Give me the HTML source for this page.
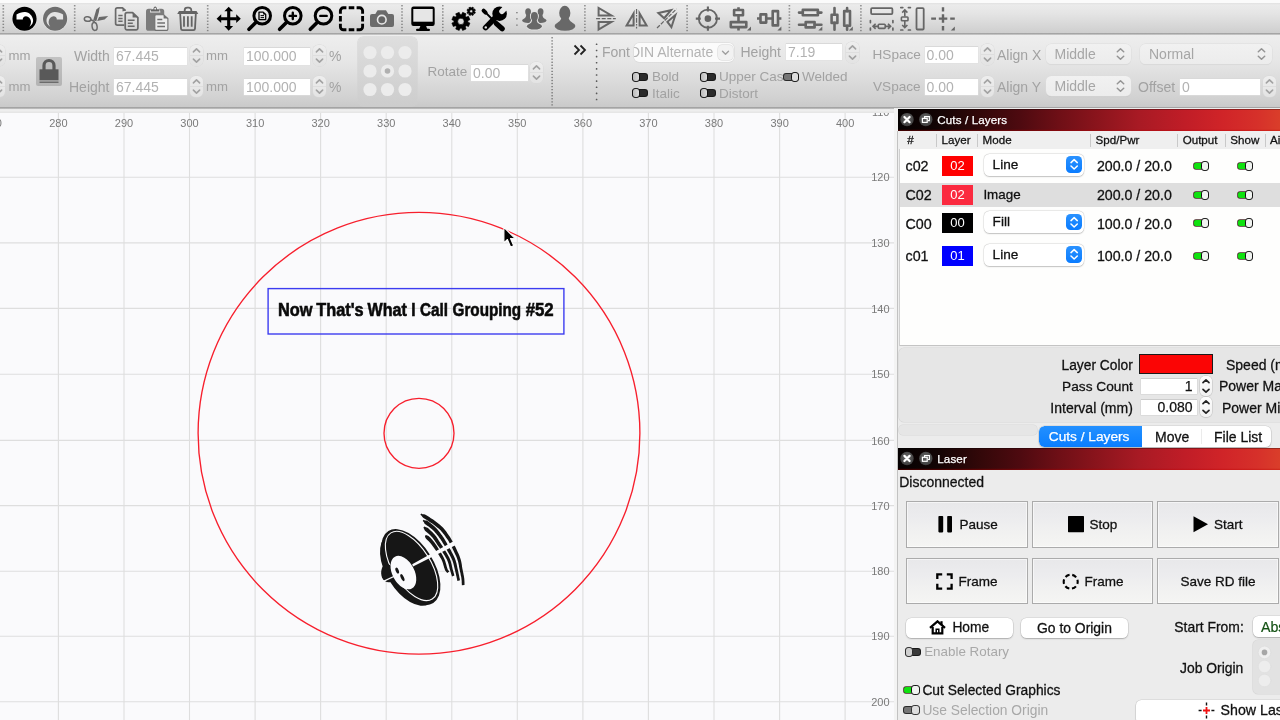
<!DOCTYPE html>
<html><head><meta charset="utf-8"><title>LightBurn</title>
<style>
html,body{margin:0;padding:0}
body{width:1280px;height:720px;overflow:hidden;position:relative;background:#ececec;font-family:"Liberation Sans",sans-serif;font-size:14px;color:#111}
#root{position:absolute;left:0;top:0;width:1280px;height:720px;overflow:hidden;will-change:transform}
.a{position:absolute}
.k{-webkit-text-stroke:.28px #111}
.t{position:absolute;white-space:nowrap;line-height:16px;height:16px}
#tb1{left:0;top:0;width:1280px;height:34px;background:linear-gradient(#fbfbfb 0,#fbfbfb 2.7px,#e3e3e3 3.4px,#ebebeb 5px,#e4e4e4 14px,#cfcfcf 32.6px,#a0a0a0 33.6px,#9c9c9c 34px)}
#tb2{left:0;top:34px;width:1280px;height:78px;background:linear-gradient(#a4a4a4 0,#eeeeee 1.2px,#e6e6e6 28px,#d0d0d0 66px,#cacaca 72.6px,#a4a4a4 73.4px,#a6a6a6 74.3px,#eaeaea 75px,#eeeeee 76.5px,#e8e8e8 78px)}
.d{color:#a2a2a2}
.inp{position:absolute;background:#fff;box-sizing:border-box;box-shadow:0 -1px 0 #d9d9d9,0 0 0 .5px #e0e0e0;color:#b2b2b2;font-size:14px;line-height:17px;white-space:nowrap;overflow:hidden;padding-left:2px}
.vsep{position:absolute;width:0;border-left:2px dotted #8f8f8f}
.stp{position:absolute;width:13px;height:21px;border-radius:5.5px;background:linear-gradient(#eeeeee,#e3e3e3);box-shadow:0 0 0 .5px #d8d8d8;overflow:hidden}
.stp svg{position:absolute;left:0;top:0}
.tg{position:absolute;margin:1px 0 0 1px;width:14.4px;height:6.2px;border-radius:2px;background:#2b2b2b;box-shadow:0 0 0 1px #181818}
.tg i{position:absolute;left:-1px;top:-2px;width:8.4px;height:10.2px;border-radius:3.1px;background:linear-gradient(90deg,#bcbcbc,#dcdcdc);border:1.3px solid #121212;box-sizing:border-box}
.tg.on{background:#0fe20f;box-shadow:0 0 0 .8px #4a2a2a}
.tg.on i{left:auto;right:-1px;background:#f1f4f1}
.tg.gr{background:#767676;box-shadow:0 0 0 1px #2a2a2a}
.tg.gr i{left:auto;right:-1px;background:#dedede}
.dd{position:absolute;box-sizing:border-box;border-radius:5.5px;background:linear-gradient(#f1f1f1,#ececec);box-shadow:0 0 0 .5px #dcdcdc,0 1px 1px rgba(0,0,0,.06);color:#a6a6a6;line-height:19px;padding-left:9px;white-space:nowrap}
#canvas{left:0;top:112px;width:894px;height:608px;background:#fafafc;overflow:hidden}
#right{left:894px;top:108px;width:386px;height:612px;background:#ececec}
</style></head>
<body>
<div id="root">
<div id="tb1" class="a"></div>
<svg class="a" style="left:0;top:0" width="1280" height="34" viewBox="0 0 1280 34"><rect x="2.5" y="5.1" width="1.6" height="1.3" fill="#858585"/><rect x="2.5" y="8.2" width="1.6" height="1.3" fill="#858585"/><rect x="2.5" y="11.3" width="1.6" height="1.3" fill="#858585"/><rect x="2.5" y="14.4" width="1.6" height="1.3" fill="#858585"/><rect x="2.5" y="17.5" width="1.6" height="1.3" fill="#858585"/><rect x="2.5" y="20.6" width="1.6" height="1.3" fill="#858585"/><rect x="2.5" y="23.7" width="1.6" height="1.3" fill="#858585"/><rect x="2.5" y="26.8" width="1.6" height="1.3" fill="#858585"/><rect x="2.5" y="29.9" width="1.6" height="1.3" fill="#858585"/>
<rect x="73.9" y="5.1" width="1.6" height="1.3" fill="#858585"/><rect x="73.9" y="8.2" width="1.6" height="1.3" fill="#858585"/><rect x="73.9" y="11.3" width="1.6" height="1.3" fill="#858585"/><rect x="73.9" y="14.4" width="1.6" height="1.3" fill="#858585"/><rect x="73.9" y="17.5" width="1.6" height="1.3" fill="#858585"/><rect x="73.9" y="20.6" width="1.6" height="1.3" fill="#858585"/><rect x="73.9" y="23.7" width="1.6" height="1.3" fill="#858585"/><rect x="73.9" y="26.8" width="1.6" height="1.3" fill="#858585"/><rect x="73.9" y="29.9" width="1.6" height="1.3" fill="#858585"/>
<rect x="206.9" y="5.1" width="1.6" height="1.3" fill="#858585"/><rect x="206.9" y="8.2" width="1.6" height="1.3" fill="#858585"/><rect x="206.9" y="11.3" width="1.6" height="1.3" fill="#858585"/><rect x="206.9" y="14.4" width="1.6" height="1.3" fill="#858585"/><rect x="206.9" y="17.5" width="1.6" height="1.3" fill="#858585"/><rect x="206.9" y="20.6" width="1.6" height="1.3" fill="#858585"/><rect x="206.9" y="23.7" width="1.6" height="1.3" fill="#858585"/><rect x="206.9" y="26.8" width="1.6" height="1.3" fill="#858585"/><rect x="206.9" y="29.9" width="1.6" height="1.3" fill="#858585"/>
<rect x="401.2" y="5.1" width="1.6" height="1.3" fill="#858585"/><rect x="401.2" y="8.2" width="1.6" height="1.3" fill="#858585"/><rect x="401.2" y="11.3" width="1.6" height="1.3" fill="#858585"/><rect x="401.2" y="14.4" width="1.6" height="1.3" fill="#858585"/><rect x="401.2" y="17.5" width="1.6" height="1.3" fill="#858585"/><rect x="401.2" y="20.6" width="1.6" height="1.3" fill="#858585"/><rect x="401.2" y="23.7" width="1.6" height="1.3" fill="#858585"/><rect x="401.2" y="26.8" width="1.6" height="1.3" fill="#858585"/><rect x="401.2" y="29.9" width="1.6" height="1.3" fill="#858585"/>
<rect x="442.0" y="5.1" width="1.6" height="1.3" fill="#858585"/><rect x="442.0" y="8.2" width="1.6" height="1.3" fill="#858585"/><rect x="442.0" y="11.3" width="1.6" height="1.3" fill="#858585"/><rect x="442.0" y="14.4" width="1.6" height="1.3" fill="#858585"/><rect x="442.0" y="17.5" width="1.6" height="1.3" fill="#858585"/><rect x="442.0" y="20.6" width="1.6" height="1.3" fill="#858585"/><rect x="442.0" y="23.7" width="1.6" height="1.3" fill="#858585"/><rect x="442.0" y="26.8" width="1.6" height="1.3" fill="#858585"/><rect x="442.0" y="29.9" width="1.6" height="1.3" fill="#858585"/>
<rect x="584.1" y="5.1" width="1.6" height="1.3" fill="#858585"/><rect x="584.1" y="8.2" width="1.6" height="1.3" fill="#858585"/><rect x="584.1" y="11.3" width="1.6" height="1.3" fill="#858585"/><rect x="584.1" y="14.4" width="1.6" height="1.3" fill="#858585"/><rect x="584.1" y="17.5" width="1.6" height="1.3" fill="#858585"/><rect x="584.1" y="20.6" width="1.6" height="1.3" fill="#858585"/><rect x="584.1" y="23.7" width="1.6" height="1.3" fill="#858585"/><rect x="584.1" y="26.8" width="1.6" height="1.3" fill="#858585"/><rect x="584.1" y="29.9" width="1.6" height="1.3" fill="#858585"/>
<rect x="686.3" y="5.1" width="1.6" height="1.3" fill="#858585"/><rect x="686.3" y="8.2" width="1.6" height="1.3" fill="#858585"/><rect x="686.3" y="11.3" width="1.6" height="1.3" fill="#858585"/><rect x="686.3" y="14.4" width="1.6" height="1.3" fill="#858585"/><rect x="686.3" y="17.5" width="1.6" height="1.3" fill="#858585"/><rect x="686.3" y="20.6" width="1.6" height="1.3" fill="#858585"/><rect x="686.3" y="23.7" width="1.6" height="1.3" fill="#858585"/><rect x="686.3" y="26.8" width="1.6" height="1.3" fill="#858585"/><rect x="686.3" y="29.9" width="1.6" height="1.3" fill="#858585"/>
<rect x="788.6" y="5.1" width="1.6" height="1.3" fill="#858585"/><rect x="788.6" y="8.2" width="1.6" height="1.3" fill="#858585"/><rect x="788.6" y="11.3" width="1.6" height="1.3" fill="#858585"/><rect x="788.6" y="14.4" width="1.6" height="1.3" fill="#858585"/><rect x="788.6" y="17.5" width="1.6" height="1.3" fill="#858585"/><rect x="788.6" y="20.6" width="1.6" height="1.3" fill="#858585"/><rect x="788.6" y="23.7" width="1.6" height="1.3" fill="#858585"/><rect x="788.6" y="26.8" width="1.6" height="1.3" fill="#858585"/><rect x="788.6" y="29.9" width="1.6" height="1.3" fill="#858585"/>
<rect x="860.1" y="5.1" width="1.6" height="1.3" fill="#858585"/><rect x="860.1" y="8.2" width="1.6" height="1.3" fill="#858585"/><rect x="860.1" y="11.3" width="1.6" height="1.3" fill="#858585"/><rect x="860.1" y="14.4" width="1.6" height="1.3" fill="#858585"/><rect x="860.1" y="17.5" width="1.6" height="1.3" fill="#858585"/><rect x="860.1" y="20.6" width="1.6" height="1.3" fill="#858585"/><rect x="860.1" y="23.7" width="1.6" height="1.3" fill="#858585"/><rect x="860.1" y="26.8" width="1.6" height="1.3" fill="#858585"/><rect x="860.1" y="29.9" width="1.6" height="1.3" fill="#858585"/>
<rect x="516.1" y="12.0" width="1.6" height="1.3" fill="#858585"/><rect x="516.1" y="18.2" width="1.6" height="1.3" fill="#858585"/><rect x="516.1" y="24.5" width="1.6" height="1.3" fill="#858585"/>
<circle cx="24.5" cy="18.75" r="12.6" fill="#f2f2f2" opacity=".6"/><circle cx="24.5" cy="18.75" r="12.1" fill="#000"/>
<path d="M16.5 14.6L16.5 19.6L22.8 19.6C22.6 17.8 24 16.3 26 16.25C28.5 16.2 30.5 18.5 30.9 21C31.2 23 30.6 25 29.4 26.7C32 25 33.4 22.5 33.1 20C32.7 16 29.5 12.1 25 11.9C22 11.8 19 12.9 16.5 14.6Z" fill="#fff"/>
<circle cx="55.1" cy="18.75" r="12.6" fill="#f2f2f2" opacity=".6"/><circle cx="55.1" cy="18.75" r="12.1" fill="#6e6e6e"/>
<path d="M16.5 14.6L16.5 19.6L22.8 19.6C22.6 17.8 24 16.3 26 16.25C28.5 16.2 30.5 18.5 30.9 21C31.2 23 30.6 25 29.4 26.7C32 25 33.4 22.5 33.1 20C32.7 16 29.5 12.1 25 11.9C22 11.8 19 12.9 16.5 14.6Z" fill="#e4e4e4" transform="translate(79.6,0) scale(-1,1)"/>
<g fill="none" stroke="#6a6a6a" stroke-width="1.5"><ellipse cx="87.6" cy="19" rx="3.3" ry="2.3" transform="rotate(8 87.6 19)"/><ellipse cx="94.6" cy="26.4" rx="2.5" ry="4" transform="rotate(-8 94.6 26.4)"/><path d="M90.8 19.8L94 21.2M94.2 22.4L94.1 21"/></g>
<path d="M93.2 20.2L96.3 9.6L99.8 6.7L98.8 12.5L96.3 21.2Z M97.2 21.1L99 17L108.2 16.1L104.6 19.4Z" fill="#6a6a6a"/>
<g fill="none" stroke="#6a6a6a" stroke-width="1.7" stroke-linejoin="round"><path d="M124.3 25.1H117.4a1.8 1.8 0 0 1 -1.8 -1.8V9.6a1.8 1.8 0 0 1 1.8 -1.8H122.5L125.6 10.6"/><path d="M127 12.6H132.6L137.9 17.6V28.1a1.8 1.8 0 0 1 -1.8 1.8H127a1.8 1.8 0 0 1 -1.8 -1.8V14.4a1.8 1.8 0 0 1 1.8 -1.8Z"/></g>
<path d="M132.6 12.6L137.9 17.6H132.6Z M122.5 7.8L125.6 10.6L122.5 11.5Z" fill="#6a6a6a"/>
<path d="M118.3 15.5H122.6M118.3 18.4H122.6M118.3 21.3H122.6M127.8 20.3H134.6M127.8 23.3H132.8M127.8 26.3H134.6" stroke="#6a6a6a" stroke-width="1.5" fill="none"/>
<rect x="146" y="8.8" width="18.2" height="22" rx="2.6" fill="#7c7c7c"/>
<path d="M150 12.6C150 9.5 152 8 155.2 5.6C158.5 8 160.4 9.5 160.4 12.6Z" fill="#ededed"/>
<path d="M151 11.6V9.3H153.4C153.4 7.6 154.2 6.4 155.2 6.4C156.2 6.4 157 7.6 157 9.3H159.4V11.6Z" fill="#666"/><circle cx="155.2" cy="8.7" r="0.9" fill="#ededed"/>
<path d="M156.2 14.7H163.6L167.9 18.6V29a1.4 1.4 0 0 1 -1.4 1.4H156.2a1.4 1.4 0 0 1 -1.4 -1.4V16.1a1.4 1.4 0 0 1 1.4 -1.4Z" fill="#ececec" stroke="#707070" stroke-width="1.1"/>
<path d="M163.6 14.7L167.9 18.6H163.6Z" fill="#707070"/>
<path d="M157.3 19.5H162.3M157.3 23H165M157.3 26.5H165" stroke="#707070" stroke-width="1.4" fill="none"/>
<path d="M179 11H196.5L198.3 13.9H177.2Z" fill="#646464"/>
<path d="M184.7 11.2V10.2a2.5 2.5 0 0 1 2.5 -2.5H188.8a2.5 2.5 0 0 1 2.5 2.5V11.2" fill="none" stroke="#646464" stroke-width="1.8"/>
<path d="M180.2 14L181 28.6a1.6 1.6 0 0 0 1.6 1.5H193.4a1.6 1.6 0 0 0 1.6 -1.5L195.8 14" fill="none" stroke="#646464" stroke-width="1.8"/>
<path d="M184 16.3V26.8M187.9 16.3V26.8M191.7 16.3V26.8" stroke="#646464" stroke-width="1.8" fill="none"/>
<path d="M228.7 10.7V26.7M220.7 18.7H236.7" stroke="#000" stroke-width="3.1" fill="none"/>
<path d="M228.7 6.699999999999999l4.4 4.6h-8.8ZM228.7 30.7l4.4 -4.6h-8.8ZM216.6 18.7l4.6 -4.4v8.8ZM240.79999999999998 18.7l-4.6 -4.4v8.8Z" fill="#000"/>
<circle cx="262.2" cy="15.7" r="8.3" fill="none" stroke="#000" stroke-width="3"/><path d="M255.79999999999998 22.5L249.0 29.299999999999997" stroke="#000" stroke-width="3.6" stroke-linecap="round"/>
<path d="M259 12.1H263.2L265.7 14.5V19.6H259Z" fill="none" stroke="#000" stroke-width="1.3" stroke-linejoin="round"/><path d="M260.6 15.6H264M260.6 17.6H264" stroke="#000" stroke-width="1" fill="none"/><path d="M263.2 12.1L265.7 14.5H263.2Z" fill="#000"/>
<circle cx="292.8" cy="15.7" r="8.3" fill="none" stroke="#000" stroke-width="3"/><path d="M286.40000000000003 22.5L279.6 29.299999999999997" stroke="#000" stroke-width="3.6" stroke-linecap="round"/>
<path d="M289.6 15.9H296M292.8 12.7V19.1" stroke="#000" stroke-width="2.4" stroke-linecap="round"/>
<circle cx="323.5" cy="15.7" r="8.3" fill="none" stroke="#000" stroke-width="3"/><path d="M317.1 22.5L310.3 29.299999999999997" stroke="#000" stroke-width="3.6" stroke-linecap="round"/>
<path d="M320.3 15.9H326.7" stroke="#000" stroke-width="2.4" stroke-linecap="round"/>
<path d="M340.4 13.8V10.8a3.0 3.0 0 0 1 3.0 -3.0H346.4M356.6 7.8H359.6a3.0 3.0 0 0 1 3.0 3.0V13.8M362.6 23.8V26.8a3.0 3.0 0 0 1 -3.0 3.0H356.6M346.4 29.8H343.4a3.0 3.0 0 0 1 -3.0 -3.0V23.8M348.7 7.8H354.3M348.7 29.8H354.3M340.4 16.1V21.5M362.6 16.1V21.5" stroke="#000" stroke-width="2.9" fill="none"/>
<rect x="370" y="14" width="24" height="12.9" rx="2" fill="#6b6b6b"/><path d="M375 14.5L377.6 10.3H386L388.6 14.5Z" fill="#6b6b6b"/><circle cx="381.8" cy="19.7" r="4.3" fill="#6b6b6b" stroke="#e8e8e8" stroke-width="1.6"/><circle cx="381.8" cy="19.7" r="2.6" fill="#646464"/>
<rect x="411.3" y="6.5" width="23.4" height="19.4" rx="2.2" fill="#000"/><rect x="413.3" y="9" width="19.4" height="12.7" fill="#e6e6e6"/><path d="M420.6 25.5H425.9L427.3 29H419.2Z" fill="#000"/><rect x="416" y="28.8" width="14" height="2.3" rx="1.1" fill="#000"/>
<path d="M467.86 22.17L469.94 23.12L468.51 26.57L466.36 25.78L465.28 26.86L466.07 29.01L462.62 30.44L461.67 28.36L460.13 28.36L459.18 30.44L455.73 29.01L456.52 26.86L455.44 25.78L453.29 26.57L451.86 23.12L453.94 22.17L453.94 20.63L451.86 19.68L453.29 16.23L455.44 17.02L456.52 15.94L455.73 13.79L459.18 12.36L460.13 14.44L461.67 14.44L462.62 12.36L466.07 13.79L465.28 15.94L466.36 17.02L468.51 16.23L469.94 19.68L467.86 20.63ZM464.09999999999997 21.4a3.2 3.2 0 1 0 -6.4 0a3.2 3.2 0 1 0 6.4 0Z" fill="#000" fill-rule="evenodd" stroke="#000" stroke-width=".6" stroke-linejoin="round"/>
<path d="M474.38 11.65L475.42 12.11L474.76 13.72L473.70 13.30L473.20 13.80L473.62 14.86L472.01 15.52L471.55 14.48L470.85 14.48L470.39 15.52L468.78 14.86L469.20 13.80L468.70 13.30L467.64 13.72L466.98 12.11L468.02 11.65L468.02 10.95L466.98 10.49L467.64 8.88L468.70 9.30L469.20 8.80L468.78 7.74L470.39 7.08L470.85 8.12L471.55 8.12L472.01 7.08L473.62 7.74L473.20 8.80L473.70 9.30L474.76 8.88L475.42 10.49L474.38 10.95ZM472.7 11.3a1.5 1.5 0 1 0 -3.0 0a1.5 1.5 0 1 0 3.0 0Z" fill="#000" fill-rule="evenodd" stroke="#000" stroke-width=".6" stroke-linejoin="round"/>
<path d="M485.6 27.6L496 17" stroke="#000" stroke-width="5.6" stroke-linecap="round"/>
<circle cx="485.8" cy="27.4" r="1.2" fill="#e6e6e6"/>
<mask id="wm" maskUnits="userSpaceOnUse" x="480" y="0" width="40" height="34"><rect x="480" y="0" width="40" height="34" fill="#fff"/><path d="M501.9 11.3L509 4.2" stroke="#000" stroke-width="5.4" stroke-linecap="round"/></mask><circle cx="499.6" cy="13.7" r="7.3" fill="#000" mask="url(#wm)"/>
<path d="M484.2 11.2L493 20" stroke="#000" stroke-width="1.9" stroke-linecap="round"/>
<path d="M483.6 10.6L485.6 12.6" stroke="#000" stroke-width="4" stroke-linecap="round"/>
<path d="M496.4 23.6L502.2 28.8" stroke="#000" stroke-width="5.2" stroke-linecap="round"/><path d="M492 19L497 24" stroke="#000" stroke-width="2.8"/>
<g fill="#686868"><ellipse cx="528.1" cy="20.55" rx="5.899999999999977" ry="2.5300000000000002"/><path d="M526.302 13.55C526.302 18.0 524.33 18.7 523.6750000000001 19.3125L532.525 19.3125C531.87 18.7 529.898 18.0 529.898 13.55Z"/><ellipse cx="528.1" cy="11.8" rx="2.9" ry="3.5"/></g>
<g fill="#686868"><ellipse cx="540.5999999999999" cy="20.55" rx="5.800000000000011" ry="2.5300000000000002"/><path d="M538.8019999999999 13.55C538.8019999999999 18.0 536.8299999999999 18.7 536.2499999999999 19.3125L544.9499999999999 19.3125C544.3699999999999 18.7 542.3979999999999 18.0 542.3979999999999 13.55Z"/><ellipse cx="540.6" cy="11.8" rx="2.9" ry="3.5"/></g>
<g fill="#e2e2e2" stroke="#e2e2e2" stroke-width="1.8"><ellipse cx="534.4" cy="26.35" rx="7.5" ry="3.266000000000001"/><path d="M532.23 18.549999999999997C532.23 23.0 529.85 23.7 528.775 24.7525L540.025 24.7525C538.9499999999999 23.7 536.5699999999999 23.0 536.5699999999999 18.549999999999997Z"/><ellipse cx="534.4" cy="16.4" rx="3.5" ry="4.3"/></g><g fill="#686868"><ellipse cx="534.4" cy="26.35" rx="7.5" ry="3.266000000000001"/><path d="M532.23 18.549999999999997C532.23 23.0 529.85 23.7 528.775 24.7525L540.025 24.7525C538.9499999999999 23.7 536.5699999999999 23.0 536.5699999999999 18.549999999999997Z"/><ellipse cx="534.4" cy="16.4" rx="3.5" ry="4.3"/></g>
<g fill="#686868"><ellipse cx="565.0" cy="26.05" rx="10.399999999999977" ry="4.737999999999999"/><path d="M561.528 16.45C561.528 21.1 557.72 21.8 557.2 23.7325L572.8 23.7325C572.28 21.8 568.472 21.1 568.472 16.45Z"/><ellipse cx="564.8" cy="12.9" rx="5.6" ry="7.1"/></g>
<g fill="none" stroke="#666" stroke-width="2" stroke-linejoin="miter"><path d="M598.6 8V15.4H611.4Z"/><path d="M598.6 29.6V21.9H611.4Z"/><path d="M626.6 25.6H633.6V13.4Z"/><path d="M646.6 25.6H639.6V13.4Z"/><path d="M658.4 13L671 10.2L664.2 18.2Z"/><path d="M675.4 15L671.4 27.2L667.4 21.8Z"/></g>
<path d="M596.1 18.65H615.8" stroke="#666" stroke-width="1.3" stroke-dasharray="4 1.6" fill="none"/><path d="M636.55 8.9V28.5" stroke="#666" stroke-width="1.2" stroke-dasharray="5 1.2 1.5 1.2" fill="none"/><path d="M657 28L676.5 9" stroke="#666" stroke-width="1.2" stroke-dasharray="4 1.4" fill="none"/>
<circle cx="707.9" cy="18.65" r="9.1" fill="none" stroke="#666" stroke-width="1.8"/><circle cx="707.9" cy="18.65" r="3.3" fill="#666"/><path d="M707.9 6.6V11.6M707.9 25.7V30.7M695.8 18.65H700.8M715 18.65H720" stroke="#666" stroke-width="2.1" fill="none"/>
<g fill="none" stroke="#666" stroke-width="2.6" stroke-linejoin="round"><rect x="734.1" y="10" width="8.9" height="5.2"/><rect x="730.8" y="22.1" width="15.5" height="5"/><path d="M738.5 7.3V10M738.5 15.2V22M738.5 27.2V30.4"/></g><path d="M751 26.599999999999998V30.4H747Z" fill="#666"/>
<g fill="none" stroke="#666" stroke-width="2.6" stroke-linejoin="round"><rect x="760.5" y="14.4" width="5.7" height="8.2"/><rect x="772.7" y="11.1" width="5.3" height="14.3"/><path d="M757 18.5H760.5M766.2 18.5H772.7M778 18.5H781.4"/></g><path d="M781.4 26.599999999999998V30.4H777.4Z" fill="#666"/>
<g fill="none" stroke="#666" stroke-width="2.6" stroke-linejoin="round" stroke-linecap="round"><rect x="802.8" y="9.9" width="15.1" height="5.3"/><rect x="805.7" y="22.1" width="8.9" height="5.3"/><path d="M799 12.6H802.8M817.9 12.6H821.4M799 24.75H805.7M814.6 24.75H821.4"/></g><path d="M822.3 26.599999999999998V30.4H818.3Z" fill="#666"/>
<g fill="none" stroke="#666" stroke-width="2.6" stroke-linejoin="round" stroke-linecap="round"><rect x="831.6" y="14.8" width="5.8" height="8.1"/><rect x="844.2" y="11.1" width="5.8" height="14.7"/><path d="M834.5 8V14.8M834.5 22.9V29.7M847.1 8V11.1M847.1 25.8V29.7"/></g><path d="M852.8 26.599999999999998V30.4H848.8Z" fill="#666"/>
<rect x="871.1" y="8.2" width="21.3" height="5.9" rx="1" fill="none" stroke="#666" stroke-width="1.8"/>
<path d="M870.4 20.6V22.6M870.4 28V30M892.9 20.6V22.6M892.9 28V30" stroke="#666" stroke-width="1.7" stroke-linecap="round"/>
<rect x="878.3" y="24.3" width="6.9" height="4.1" rx=".8" fill="none" stroke="#666" stroke-width="1.6"/><path d="M878 26.35H873.2M875.6 23.8L873 26.35L875.6 28.9M885.4 26.35H890.4M888 23.8L890.6 26.35L888 28.9" fill="none" stroke="#666" stroke-width="1.6"/>
<rect x="916.5" y="8.2" width="7.2" height="21.3" rx="1" fill="none" stroke="#666" stroke-width="1.8"/>
<path d="M900.8 7.6H902.8M908.4 7.6H910.4M900.8 30H902.8M908.4 30H910.4" stroke="#666" stroke-width="1.7" stroke-linecap="round"/>
<rect x="901.4" y="17" width="6.6" height="3.8" rx=".8" fill="none" stroke="#666" stroke-width="1.6"/><path d="M904.8 16.6V10.2M902.2 12.6L904.8 10L907.4 12.6M904.8 21V27.4M902.2 25L904.8 27.6L907.4 25" fill="none" stroke="#666" stroke-width="1.6"/>
<path d="M943 7.3V11.4M943 14.2V22.8M943 26V30.4M931.2 18.65H936M938.8 18.65H947.3M950.2 18.65H954.8" stroke="#666" stroke-width="2.4" fill="none"/><path d="M954.8 26.599999999999998V30.4H950.8Z" fill="#666"/></svg>
<div id="tb2" class="a"></div>
<div class="stp" style="left:-8px;top:45px"><svg width="13" height="21" viewBox="0 0 13 21"><path d="M0 10.5H13" stroke="#dadada" stroke-width=".8"/><path d="M3.4 6.9L6.5 3.9L9.6 6.9M3.4 14.1L6.5 17.1L9.6 14.1" fill="none" stroke="#a2a2a2" stroke-width="1.6" stroke-linecap="round" stroke-linejoin="round"/></svg></div>
<div class="stp" style="left:-8px;top:76px"><svg width="13" height="21" viewBox="0 0 13 21"><path d="M0 10.5H13" stroke="#dadada" stroke-width=".8"/><path d="M3.4 6.9L6.5 3.9L9.6 6.9M3.4 14.1L6.5 17.1L9.6 14.1" fill="none" stroke="#a2a2a2" stroke-width="1.6" stroke-linecap="round" stroke-linejoin="round"/></svg></div>
<div class="t d" style="left:8.5px;top:48px;font-size:13.2px">mm</div>
<div class="t d" style="left:8.5px;top:79px;font-size:13.2px">mm</div>
<div class="a" style="left:36px;top:57px;width:26px;height:29px;background:linear-gradient(#c2c2c2,#b4b4b4);border-radius:2px"><svg class="a" style="left:0;top:0" width="26" height="29" viewBox="0 0 26 29"><path d="M8 13V8.5a5 5 0 0 1 10 0V13" fill="none" stroke="#595959" stroke-width="3.2"/><rect x="3.5" y="12.3" width="19" height="11" fill="#595959"/><rect x="3.5" y="24.6" width="19" height="1.2" fill="#595959"/></svg></div>
<div class="t d" style="left:74px;top:48px;">Width</div>
<div class="t d" style="left:69px;top:79px;">Height</div>
<div class="inp" style="left:114px;top:47.5px;width:73px;height:17px;">67.445</div>
<div class="inp" style="left:114px;top:78.5px;width:73px;height:16px;">67.445</div>
<div class="stp" style="left:190px;top:45px"><svg width="13" height="21" viewBox="0 0 13 21"><path d="M0 10.5H13" stroke="#dadada" stroke-width=".8"/><path d="M3.4 6.9L6.5 3.9L9.6 6.9M3.4 14.1L6.5 17.1L9.6 14.1" fill="none" stroke="#a2a2a2" stroke-width="1.6" stroke-linecap="round" stroke-linejoin="round"/></svg></div>
<div class="stp" style="left:190px;top:76px"><svg width="13" height="21" viewBox="0 0 13 21"><path d="M0 10.5H13" stroke="#dadada" stroke-width=".8"/><path d="M3.4 6.9L6.5 3.9L9.6 6.9M3.4 14.1L6.5 17.1L9.6 14.1" fill="none" stroke="#a2a2a2" stroke-width="1.6" stroke-linecap="round" stroke-linejoin="round"/></svg></div>
<div class="t d" style="left:206px;top:48px;font-size:13.2px">mm</div>
<div class="t d" style="left:206px;top:79px;font-size:13.2px">mm</div>
<div class="inp" style="left:244px;top:47.5px;width:66px;height:17px;">100.000</div>
<div class="inp" style="left:244px;top:78.5px;width:66px;height:16px;">100.000</div>
<div class="stp" style="left:313px;top:45px"><svg width="13" height="21" viewBox="0 0 13 21"><path d="M0 10.5H13" stroke="#dadada" stroke-width=".8"/><path d="M3.4 6.9L6.5 3.9L9.6 6.9M3.4 14.1L6.5 17.1L9.6 14.1" fill="none" stroke="#a2a2a2" stroke-width="1.6" stroke-linecap="round" stroke-linejoin="round"/></svg></div>
<div class="stp" style="left:313px;top:76px"><svg width="13" height="21" viewBox="0 0 13 21"><path d="M0 10.5H13" stroke="#dadada" stroke-width=".8"/><path d="M3.4 6.9L6.5 3.9L9.6 6.9M3.4 14.1L6.5 17.1L9.6 14.1" fill="none" stroke="#a2a2a2" stroke-width="1.6" stroke-linecap="round" stroke-linejoin="round"/></svg></div>
<div class="t d" style="left:329px;top:48px;">%</div>
<div class="t d" style="left:329px;top:79px;">%</div>
<div class="a" style="left:358px;top:37px;width:59px;height:69px;border-radius:5px;background:linear-gradient(#dedede,#cdcdcd);box-shadow:0 0 0 .5px #cfcfcf"><svg class="a" style="left:0;top:0" width="59" height="69"><circle cx="12" cy="15.5" r="6.6" fill="#ececec"/><circle cx="12" cy="34" r="6.6" fill="#ececec"/><circle cx="12" cy="52.5" r="6.6" fill="#ececec"/><circle cx="29.5" cy="15.5" r="6.6" fill="#ececec"/><circle cx="29.5" cy="34" r="6.6" fill="#ececec"/><circle cx="29.5" cy="52.5" r="6.6" fill="#ececec"/><circle cx="47" cy="15.5" r="6.6" fill="#ececec"/><circle cx="47" cy="34" r="6.6" fill="#ececec"/><circle cx="47" cy="52.5" r="6.6" fill="#ececec"/><circle cx="29.5" cy="34" r="2.8" fill="#b0b0b0"/></svg></div>
<div class="t d" style="left:427.5px;top:64px;font-size:13.5px">Rotate</div>
<div class="inp" style="left:471px;top:64.5px;width:56.5px;height:16px;">0.00</div>
<div class="stp" style="left:530px;top:62px"><svg width="13" height="21" viewBox="0 0 13 21"><path d="M0 10.5H13" stroke="#dadada" stroke-width=".8"/><path d="M3.4 6.9L6.5 3.9L9.6 6.9M3.4 14.1L6.5 17.1L9.6 14.1" fill="none" stroke="#a2a2a2" stroke-width="1.6" stroke-linecap="round" stroke-linejoin="round"/></svg></div>
<svg class="a" style="left:0;top:0;pointer-events:none" width="1280" height="112"><rect x="551.40" y="37.10" width="1.4" height="1.4" rx=".4" fill="#6e6e6e"/><rect x="551.40" y="40.15" width="1.4" height="1.4" rx=".4" fill="#6e6e6e"/><rect x="551.40" y="43.20" width="1.4" height="1.4" rx=".4" fill="#6e6e6e"/><rect x="551.40" y="46.25" width="1.4" height="1.4" rx=".4" fill="#6e6e6e"/><rect x="551.40" y="49.30" width="1.4" height="1.4" rx=".4" fill="#6e6e6e"/><rect x="551.40" y="52.35" width="1.4" height="1.4" rx=".4" fill="#6e6e6e"/><rect x="551.40" y="55.40" width="1.4" height="1.4" rx=".4" fill="#6e6e6e"/><rect x="551.40" y="58.45" width="1.4" height="1.4" rx=".4" fill="#6e6e6e"/><rect x="551.40" y="61.50" width="1.4" height="1.4" rx=".4" fill="#6e6e6e"/><rect x="551.40" y="64.55" width="1.4" height="1.4" rx=".4" fill="#6e6e6e"/><rect x="551.40" y="67.60" width="1.4" height="1.4" rx=".4" fill="#6e6e6e"/><rect x="551.40" y="70.65" width="1.4" height="1.4" rx=".4" fill="#6e6e6e"/><rect x="551.40" y="73.70" width="1.4" height="1.4" rx=".4" fill="#6e6e6e"/><rect x="551.40" y="76.75" width="1.4" height="1.4" rx=".4" fill="#6e6e6e"/><rect x="551.40" y="79.80" width="1.4" height="1.4" rx=".4" fill="#6e6e6e"/><rect x="551.40" y="82.85" width="1.4" height="1.4" rx=".4" fill="#6e6e6e"/><rect x="551.40" y="85.90" width="1.4" height="1.4" rx=".4" fill="#6e6e6e"/><rect x="551.40" y="88.95" width="1.4" height="1.4" rx=".4" fill="#6e6e6e"/><rect x="551.40" y="92.00" width="1.4" height="1.4" rx=".4" fill="#6e6e6e"/><rect x="551.40" y="95.05" width="1.4" height="1.4" rx=".4" fill="#6e6e6e"/><rect x="551.40" y="98.10" width="1.4" height="1.4" rx=".4" fill="#6e6e6e"/><rect x="551.40" y="101.15" width="1.4" height="1.4" rx=".4" fill="#6e6e6e"/><rect x="551.40" y="104.20" width="1.4" height="1.4" rx=".4" fill="#6e6e6e"/></svg>
<svg class="a" style="left:573px;top:44px" width="14" height="12" viewBox="0 0 14 12"><path d="M1.5 1.5L6 6L1.5 10.5M7.5 1.5L12 6L7.5 10.5" fill="none" stroke="#222" stroke-width="1.8"/></svg>
<svg class="a" style="left:0;top:0;pointer-events:none" width="1280" height="112"><rect x="595.80" y="43.50" width="1.6" height="1.6" rx=".4" fill="#5a5a5a"/><rect x="595.80" y="49.64" width="1.6" height="1.6" rx=".4" fill="#5a5a5a"/><rect x="595.80" y="55.78" width="1.6" height="1.6" rx=".4" fill="#5a5a5a"/><rect x="595.80" y="61.92" width="1.6" height="1.6" rx=".4" fill="#5a5a5a"/><rect x="595.80" y="68.06" width="1.6" height="1.6" rx=".4" fill="#5a5a5a"/><rect x="595.80" y="74.20" width="1.6" height="1.6" rx=".4" fill="#5a5a5a"/><rect x="595.80" y="80.34" width="1.6" height="1.6" rx=".4" fill="#5a5a5a"/><rect x="595.80" y="86.48" width="1.6" height="1.6" rx=".4" fill="#5a5a5a"/><rect x="595.80" y="92.62" width="1.6" height="1.6" rx=".4" fill="#5a5a5a"/><rect x="595.80" y="98.76" width="1.6" height="1.6" rx=".4" fill="#5a5a5a"/></svg>
<div class="t d" style="left:602px;top:44px;">Font</div>
<div class="a" style="left:634px;top:42.5px;width:100px;height:19px;border-radius:5px;background:#fbfbfb;box-shadow:0 0 0 .5px #d6d6d6;overflow:hidden"><div class="t d" style="left:-4px;top:1.5px;color:#b4b4b4">DIN Alternate</div><div class="a" style="left:84px;top:2px;width:15px;height:15px;border-radius:4px;background:#f2f2f2;box-shadow:0 0 0 .5px #d4d4d4"><svg width="15" height="15" viewBox="0 0 15 15"><path d="M4.5 6.2L7.5 9.2L10.5 6.2" fill="none" stroke="#a0a0a0" stroke-width="1.4" stroke-linecap="round" stroke-linejoin="round"/></svg></div></div>
<div class="t d" style="left:740.5px;top:44px;">Height</div>
<div class="inp" style="left:786px;top:44px;width:56px;height:16px;">7.19</div>
<div class="stp" style="left:846px;top:41.5px"><svg width="13" height="21" viewBox="0 0 13 21"><path d="M0 10.5H13" stroke="#dadada" stroke-width=".8"/><path d="M3.4 6.9L6.5 3.9L9.6 6.9M3.4 14.1L6.5 17.1L9.6 14.1" fill="none" stroke="#a2a2a2" stroke-width="1.6" stroke-linecap="round" stroke-linejoin="round"/></svg></div>
<div class="tg " style="left:632px;top:73px"><i></i></div>
<div class="t d" style="left:652px;top:69.3px;font-size:13.5px">Bold</div>
<div class="tg " style="left:632px;top:89.3px"><i></i></div>
<div class="t d" style="left:652px;top:85.8px;font-size:13.5px">Italic</div>
<div class="tg " style="left:700px;top:73px"><i></i></div>
<div class="t d" style="left:719px;top:69.3px;width:64px;overflow:hidden;font-size:13.5px">Upper Case</div>
<div class="tg " style="left:700px;top:89.3px"><i></i></div>
<div class="t d" style="left:719px;top:85.8px;font-size:13.5px">Distort</div>
<div class="tg gr" style="left:782.9px;top:73px"><i></i></div>
<div class="t d" style="left:802px;top:69.3px;font-size:13.5px">Welded</div>
<div class="t d" style="left:872.5px;top:46.5px;font-size:13.6px">HSpace</div>
<div class="t d" style="left:873px;top:79px;font-size:13.6px">VSpace</div>
<div class="inp" style="left:924.5px;top:47px;width:53px;height:16px;">0.00</div>
<div class="inp" style="left:924.5px;top:79px;width:53px;height:16px;">0.00</div>
<div class="stp" style="left:980.5px;top:44px"><svg width="13" height="21" viewBox="0 0 13 21"><path d="M0 10.5H13" stroke="#dadada" stroke-width=".8"/><path d="M3.4 6.9L6.5 3.9L9.6 6.9M3.4 14.1L6.5 17.1L9.6 14.1" fill="none" stroke="#a2a2a2" stroke-width="1.6" stroke-linecap="round" stroke-linejoin="round"/></svg></div>
<div class="stp" style="left:980.5px;top:76px"><svg width="13" height="21" viewBox="0 0 13 21"><path d="M0 10.5H13" stroke="#dadada" stroke-width=".8"/><path d="M3.4 6.9L6.5 3.9L9.6 6.9M3.4 14.1L6.5 17.1L9.6 14.1" fill="none" stroke="#a2a2a2" stroke-width="1.6" stroke-linecap="round" stroke-linejoin="round"/></svg></div>
<div class="t d" style="left:997px;top:46.5px;">Align X</div>
<div class="t d" style="left:997px;top:79px;">Align Y</div>
<div class="dd" style="left:1045.5px;top:43.7px;width:85.5px;height:20.6px;line-height:21.4px">Middle<svg class="a" style="right:6px;top:3.6px" width="9" height="14" viewBox="0 0 9 14"><path d="M1.3 4.8L4.5 1.8L7.7 4.8M1.3 9.2L4.5 12.2L7.7 9.2" fill="none" stroke="#949494" stroke-width="1.5" stroke-linecap="round" stroke-linejoin="round"/></svg></div>
<div class="dd" style="left:1045.5px;top:75.7px;width:85.5px;height:20.6px;line-height:21.4px">Middle<svg class="a" style="right:6px;top:3.6px" width="9" height="14" viewBox="0 0 9 14"><path d="M1.3 4.8L4.5 1.8L7.7 4.8M1.3 9.2L4.5 12.2L7.7 9.2" fill="none" stroke="#949494" stroke-width="1.5" stroke-linecap="round" stroke-linejoin="round"/></svg></div>
<div class="dd" style="left:1140px;top:43.7px;width:131.5px;height:20.6px;line-height:21.4px">Normal<svg class="a" style="right:6px;top:3.6px" width="9" height="14" viewBox="0 0 9 14"><path d="M1.3 4.8L4.5 1.8L7.7 4.8M1.3 9.2L4.5 12.2L7.7 9.2" fill="none" stroke="#949494" stroke-width="1.5" stroke-linecap="round" stroke-linejoin="round"/></svg></div>
<div class="t d" style="left:1138px;top:79px;">Offset</div>
<div class="inp" style="left:1180px;top:79px;width:79.5px;height:16px;">0</div>
<div class="stp" style="left:1263px;top:76px"><svg width="13" height="21" viewBox="0 0 13 21"><path d="M0 10.5H13" stroke="#dadada" stroke-width=".8"/><path d="M3.4 6.9L6.5 3.9L9.6 6.9M3.4 14.1L6.5 17.1L9.6 14.1" fill="none" stroke="#a2a2a2" stroke-width="1.6" stroke-linecap="round" stroke-linejoin="round"/></svg></div>
<div id="canvas" class="a">
<svg class="a" style="left:0;top:0" width="894" height="608" viewBox="0 112 894 608" font-family="Liberation Sans, sans-serif">
<path d="M-7.2 112V720M58.4 112V720M124.0 112V720M189.5 112V720M255.1 112V720M320.6 112V720M386.2 112V720M451.8 112V720M517.3 112V720M582.9 112V720M648.4 112V720M714.0 112V720M779.6 112V720M845.1 112V720M0 111.8H894M0 177.3H894M0 242.9H894M0 308.4H894M0 374.3H894M0 440.4H894M0 505.6H894M0 571.3H894M0 636.3H894M0 701.7H894" stroke="#dedede" stroke-width="1.1" fill="none"/>
<text x="-7.2" y="126.6" font-size="11" fill="#7a7a7a" text-anchor="middle">270</text>
<text x="58.4" y="126.6" font-size="11" fill="#7a7a7a" text-anchor="middle">280</text>
<text x="124.0" y="126.6" font-size="11" fill="#7a7a7a" text-anchor="middle">290</text>
<text x="189.5" y="126.6" font-size="11" fill="#7a7a7a" text-anchor="middle">300</text>
<text x="255.1" y="126.6" font-size="11" fill="#7a7a7a" text-anchor="middle">310</text>
<text x="320.6" y="126.6" font-size="11" fill="#7a7a7a" text-anchor="middle">320</text>
<text x="386.2" y="126.6" font-size="11" fill="#7a7a7a" text-anchor="middle">330</text>
<text x="451.8" y="126.6" font-size="11" fill="#7a7a7a" text-anchor="middle">340</text>
<text x="517.3" y="126.6" font-size="11" fill="#7a7a7a" text-anchor="middle">350</text>
<text x="582.9" y="126.6" font-size="11" fill="#7a7a7a" text-anchor="middle">360</text>
<text x="648.4" y="126.6" font-size="11" fill="#7a7a7a" text-anchor="middle">370</text>
<text x="714.0" y="126.6" font-size="11" fill="#7a7a7a" text-anchor="middle">380</text>
<text x="779.6" y="126.6" font-size="11" fill="#7a7a7a" text-anchor="middle">390</text>
<text x="845.1" y="126.6" font-size="11" fill="#7a7a7a" text-anchor="middle">400</text>
<text x="889.5" y="115.9" font-size="11" fill="#7a7a7a" text-anchor="end">110</text>
<text x="889.5" y="181.4" font-size="11" fill="#7a7a7a" text-anchor="end">120</text>
<text x="889.5" y="247.0" font-size="11" fill="#7a7a7a" text-anchor="end">130</text>
<text x="889.5" y="312.5" font-size="11" fill="#7a7a7a" text-anchor="end">140</text>
<text x="889.5" y="378.4" font-size="11" fill="#7a7a7a" text-anchor="end">150</text>
<text x="889.5" y="444.5" font-size="11" fill="#7a7a7a" text-anchor="end">160</text>
<text x="889.5" y="509.7" font-size="11" fill="#7a7a7a" text-anchor="end">170</text>
<text x="889.5" y="575.4" font-size="11" fill="#7a7a7a" text-anchor="end">180</text>
<text x="889.5" y="640.4" font-size="11" fill="#7a7a7a" text-anchor="end">190</text>
<text x="889.5" y="705.8" font-size="11" fill="#7a7a7a" text-anchor="end">200</text>
<circle cx="419" cy="433.3" r="220.9" fill="none" stroke="#f71f2d" stroke-width="1.35"/>
<circle cx="419" cy="433.3" r="35" fill="none" stroke="#f71f2d" stroke-width="1.35"/>
<rect x="268.1" y="288.6" width="295.8" height="45.4" fill="none" stroke="#3c3cf0" stroke-width="1.4"/>
<text id="din" y="316" font-size="19.2" font-weight="bold" fill="#0a0a0a" stroke="#0a0a0a" stroke-width=".6"><tspan x="277.90" textLength="34.60" lengthAdjust="spacingAndGlyphs">Now</tspan> <tspan x="316.30" textLength="47.40" lengthAdjust="spacingAndGlyphs">That's</tspan> <tspan x="367.50" textLength="39.35" lengthAdjust="spacingAndGlyphs">What</tspan> <tspan x="411.30" textLength="4.30" lengthAdjust="spacingAndGlyphs">I</tspan> <tspan x="420.00" textLength="28.10" lengthAdjust="spacingAndGlyphs">Call</tspan> <tspan x="452.50" textLength="68.70" lengthAdjust="spacingAndGlyphs">Grouping</tspan> <tspan x="525.65" textLength="28.05" lengthAdjust="spacingAndGlyphs">#52</tspan></text>
<g id="spk">
<g transform="rotate(58 410.8 567)">
<ellipse cx="411.8" cy="571" rx="40" ry="21.5" fill="#161616"/>
<ellipse cx="410.8" cy="567" rx="42.4" ry="22.8" fill="#161616"/>
<ellipse cx="410.3" cy="565.8" rx="39" ry="19" fill="none" stroke="#fafafc" stroke-width="1.1"/>
</g>
<path d="M386.5 563.5C381.5 565 380 572.5 382 577.5C383.6 581.4 387.5 583 390.5 582L392 566Z" fill="#161616"/>
<ellipse cx="403.4" cy="572.6" rx="18" ry="11" fill="#fafafc" transform="rotate(62 403.4 572.6)"/>
<ellipse cx="397.2" cy="570.6" rx="1.5" ry="3.2" fill="#161616" transform="rotate(-22 397.2 570.6)"/>
<ellipse cx="402.4" cy="577.6" rx="1.5" ry="3.8" fill="#161616" transform="rotate(-25 402.4 577.6)"/>
<path d="M383.4 581.4L398 574.5" stroke="#fafafc" stroke-width="1.2" fill="none"/>
<path d="M420.4 514.8L421.6 515.7L422.4 517.1L423.5 518.1L424.7 518.8L426.0 519.6L427.2 520.3L428.4 521.1L429.6 521.9L430.9 522.7L432.2 523.6L433.5 524.6L434.8 525.5L436.0 526.4L437.2 527.4L438.3 528.3L439.4 529.2L440.3 530.1L441.1 531.0L441.9 531.9L442.6 532.8L443.3 533.7L444.0 534.6L444.7 535.6L445.4 536.5L446.0 537.4L446.6 538.2L447.2 539.0L447.7 539.8L448.2 540.6L448.8 541.6L449.4 542.7L450.1 544.0L450.9 545.5L451.9 547.3L452.8 549.3L453.8 551.3L454.8 553.4L455.8 555.4L456.6 557.3L457.2 558.9L457.7 560.4L458.1 561.8L458.4 563.1L458.7 564.4L458.9 565.6L459.1 566.9L459.3 568.1L459.6 569.4L459.8 570.6L460.1 571.9L460.4 573.1L460.6 574.2L460.8 575.4L461.1 576.4L461.3 577.5L461.4 578.5L461.5 579.4L461.6 580.3L461.7 581.1L461.7 581.9L461.7 582.8L461.8 583.6L461.8 584.4L461.9 585.3L464.5 585.1L464.5 584.3L464.5 583.5L464.5 582.7L464.5 581.8L464.4 581.0L464.4 580.1L464.3 579.1L464.2 578.1L464.0 577.0L463.9 575.9L463.6 574.8L463.4 573.6L463.2 572.5L462.9 571.3L462.7 570.0L462.4 568.8L462.2 567.6L462.0 566.4L461.9 565.2L461.7 563.9L461.4 562.5L461.1 561.1L460.7 559.5L460.2 557.9L459.5 556.1L458.7 554.1L457.7 552.0L456.8 549.9L455.8 547.8L454.8 545.8L453.9 544.0L453.1 542.4L452.4 541.1L451.7 539.9L451.2 538.9L450.6 538.0L450.0 537.1L449.5 536.3L448.9 535.4L448.2 534.5L447.5 533.5L446.9 532.6L446.2 531.6L445.4 530.6L444.6 529.6L443.8 528.6L442.9 527.6L441.8 526.6L440.7 525.6L439.6 524.5L438.3 523.5L437.0 522.5L435.7 521.5L434.4 520.6L433.1 519.6L431.8 518.7L430.5 517.9L429.3 517.0L428.0 516.2L426.8 515.5L425.5 514.7L424.1 514.3L422.5 514.2L421.2 513.6ZM422.7 520.9L423.8 522.1L424.6 523.8L426.0 524.7L427.3 525.7L428.6 526.6L429.8 527.5L431.0 528.4L432.0 529.3L433.0 530.2L433.9 531.1L434.7 532.0L435.5 532.9L436.3 533.8L437.0 534.7L437.7 535.6L438.5 536.6L439.1 537.5L439.7 538.3L440.3 539.0L440.8 539.8L441.4 540.7L442.0 541.6L442.6 542.8L443.4 544.1L444.4 545.6L445.4 547.4L446.6 549.4L447.7 551.4L448.9 553.5L450.0 555.5L451.0 557.4L451.8 559.0L452.4 560.5L452.9 561.9L453.3 563.2L453.6 564.5L453.9 565.7L454.2 566.9L454.5 568.2L454.8 569.4L455.1 570.7L455.4 572.0L455.7 573.3L456.0 574.5L456.2 575.7L456.5 576.8L456.7 577.8L456.9 578.6L457.0 579.2L457.1 579.6L457.2 580.0L457.2 580.2L457.3 580.3L457.3 580.5L457.3 580.6L457.4 580.9L460.0 580.3L460.0 580.1L459.9 579.9L459.9 579.8L459.9 579.6L459.8 579.4L459.8 579.1L459.7 578.6L459.5 578.0L459.4 577.2L459.2 576.2L459.0 575.1L458.7 573.9L458.5 572.7L458.2 571.4L457.9 570.0L457.6 568.8L457.3 567.5L457.1 566.3L456.8 565.1L456.6 563.8L456.2 562.4L455.8 561.0L455.3 559.4L454.6 557.8L453.8 556.0L452.8 554.0L451.7 551.9L450.6 549.8L449.4 547.7L448.3 545.7L447.3 543.9L446.4 542.3L445.6 541.0L444.9 539.8L444.3 538.8L443.8 537.9L443.2 537.1L442.6 536.2L442.0 535.3L441.3 534.4L440.6 533.5L439.9 532.5L439.1 531.5L438.3 530.5L437.5 529.5L436.6 528.5L435.6 527.5L434.6 526.5L433.4 525.5L432.2 524.5L430.9 523.5L429.6 522.5L428.2 521.6L426.9 520.6L425.0 520.4L423.5 519.7ZM423.4 527.6L424.2 529.2L425.0 530.7L426.2 531.7L427.4 532.8L428.6 533.8L429.7 534.8L430.7 535.8L431.6 536.7L432.4 537.6L433.1 538.4L433.6 539.2L434.2 539.9L434.7 540.8L435.3 541.7L436.1 542.8L436.9 544.2L438.0 545.7L439.3 547.5L440.6 549.5L442.0 551.5L443.3 553.6L444.6 555.6L445.7 557.4L446.6 559.1L447.3 560.6L447.9 562.0L448.3 563.3L448.7 564.6L449.0 565.9L449.3 567.1L449.5 568.3L449.9 569.5L450.2 570.5L450.5 571.5L450.7 572.3L451.0 573.2L451.2 573.9L451.5 574.7L451.7 575.5L452.0 576.4L454.4 575.6L454.2 574.8L454.0 574.0L453.8 573.2L453.6 572.4L453.3 571.6L453.1 570.7L452.8 569.8L452.5 568.7L452.3 567.6L452.0 566.5L451.8 565.3L451.5 563.9L451.1 562.5L450.7 561.0L450.1 559.4L449.4 557.7L448.4 555.9L447.3 553.9L446.0 551.8L444.7 549.7L443.4 547.6L442.1 545.6L440.9 543.8L439.9 542.2L439.0 540.9L438.3 539.8L437.7 538.8L437.2 537.9L436.6 537.1L436.0 536.2L435.2 535.3L434.4 534.3L433.4 533.2L432.3 532.1L431.1 531.0L430.0 529.9L428.8 528.8L427.6 527.7L426.0 527.2L424.4 526.6ZM424.9 536.0L425.3 537.4L425.9 538.6L426.8 539.4L427.6 540.2L428.5 541.0L429.4 541.9L430.3 543.0L431.3 544.3L432.4 545.8L433.7 547.5L435.1 549.5L436.5 551.5L437.8 553.6L439.1 555.5L440.2 557.4L441.2 559.1L441.9 560.6L442.5 562.1L443.0 563.5L443.4 564.9L443.8 566.2L444.1 567.4L444.5 568.6L444.8 569.6L445.2 570.4L445.6 571.1L446.0 571.6L446.3 572.0L446.6 572.3L446.9 572.5L447.0 572.7L447.3 573.0L449.3 571.4L449.0 571.0L448.7 570.7L448.5 570.4L448.3 570.2L448.1 570.0L447.9 569.7L447.6 569.3L447.4 568.6L447.1 567.7L446.8 566.7L446.5 565.5L446.1 564.1L445.7 562.7L445.2 561.1L444.6 559.4L443.8 557.7L442.9 555.9L441.8 553.9L440.5 551.8L439.2 549.7L437.8 547.6L436.5 545.6L435.3 543.8L434.1 542.1L433.0 540.8L432.0 539.6L431.1 538.5L430.2 537.6L429.3 536.7L428.5 535.9L427.3 535.4L425.9 535.0Z" fill="#161616"/>
<path d="M412.2 564.2L453.6 541.2L455.4 545.2L413 566.4Z" fill="#fafafc"/>
</g>
<g id="cur"><path d="M503.9 227.4L503.9 242.8L507.4 239.5L510.6 247L513.7 245.7L510.5 238.5L515 238.3Z" fill="#000" stroke="#fff" stroke-width="1.1" stroke-linejoin="round"/></g>
</svg>
</div>
<div class="a" style="left:894px;top:108px;width:386px;height:612px;background:#ececec"></div>
<div class="a" style="left:894px;top:108.6px;width:4.3px;height:612px;background:#f3f3f3"></div>
<div class="a" style="left:896.9px;top:130.9px;width:1.5px;height:590px;background:#c2c2c2"></div>
<div class="a" style="left:898.3px;top:109.1px;width:381.7px;height:21.8px;background:linear-gradient(90deg,#050101 0,#120404 10%,#340809 22%,#4e0a10 32%,#6e0f16 42%,#8a141c 52%,#a81a24 63%,#c01d27 75%,#d02428 85%,#d6302a 94%,#da3e2a 100%);box-shadow:inset 0 -1.2px 0 rgba(190,0,0,.3), inset 0 1px 0 rgba(0,0,0,.3)"></div><svg class="a" style="left:898px;top:109.1px" width="50" height="21.8" viewBox="898 109.1 50 21.8"><defs><radialGradient id="bg109" cx=".5" cy=".4" r=".6"><stop offset="0" stop-color="#6a6a6a"/><stop offset="1" stop-color="#3c3c3c"/></radialGradient></defs><circle cx="907" cy="119.7" r="6.7" fill="url(#bg109)"/><circle cx="925.8" cy="119.7" r="6.7" fill="url(#bg109)"/><path d="M904.4 117.10000000000001L909.6 122.3M909.6 117.10000000000001L904.4 122.3" stroke="#fff" stroke-width="2.2" stroke-linecap="round"/><path d="M924.6 118.10000000000001V116.7H929.4V120.7H928" fill="none" stroke="#fff" stroke-width="1.1"/><rect x="922.4" y="118.5" width="4.8" height="4" fill="none" stroke="#fff" stroke-width="1.2"/></svg><div class="t " style="left:937.3px;top:112.0px;color:#fff;font-size:11.6px;letter-spacing:.12px;-webkit-text-stroke:.25px #fff">Cuts / Layers</div>
<div class="a" style="left:898.3px;top:130.9px;width:381.7px;height:215px;background:#fefefd"></div>
<div class="a" style="left:898.3px;top:130.9px;width:381.7px;height:17.9px;background:#efefef"></div>
<div class="t  k" style="left:907.2px;top:132.4px;font-size:11.6px">#</div>
<div class="t  k" style="left:941.5px;top:132.4px;font-size:11.6px">Layer</div>
<div class="t  k" style="left:982.6px;top:132.4px;font-size:11.6px">Mode</div>
<div class="t  k" style="left:1095.6px;top:132.4px;font-size:11.6px">Spd/Pwr</div>
<div class="t  k" style="left:1182.7px;top:132.4px;font-size:11.6px">Output</div>
<div class="t  k" style="left:1230.3px;top:132.4px;font-size:11.6px">Show</div>
<div class="t  k" style="left:1270px;top:132.4px;font-size:11.6px">Ai</div>
<div class="a" style="left:935.9px;top:134.2px;width:1.2px;height:12.6px;background:#c9c9c9"></div>
<div class="a" style="left:976.9px;top:134.2px;width:1.2px;height:12.6px;background:#c9c9c9"></div>
<div class="a" style="left:1090.0px;top:134.2px;width:1.2px;height:12.6px;background:#c9c9c9"></div>
<div class="a" style="left:1177.1000000000001px;top:134.2px;width:1.2px;height:12.6px;background:#c9c9c9"></div>
<div class="a" style="left:1225.0px;top:134.2px;width:1.2px;height:12.6px;background:#c9c9c9"></div>
<div class="a" style="left:1264.9px;top:134.2px;width:1.2px;height:12.6px;background:#c9c9c9"></div>
<div class="a" style="left:898.3px;top:182.5px;width:381.7px;height:24.1px;background:#dedede"></div>
<div class="t  k" style="left:905.5px;top:158.10000000000002px;font-size:14.3px">c02</div>
<div class="a" style="left:942px;top:155.8px;width:31px;height:20.2px;background:#ff0000;color:#fff;font-size:13px;text-align:center;line-height:20.5px">02</div>
<div class="a" style="left:983.6px;top:153.8px;width:100.6px;height:21.8px;background:#fff;border-radius:5.5px;box-shadow:0 0 0 .5px rgba(0,0,0,.1),0 .6px 1.4px rgba(0,0,0,.2)"><div class="t k" style="left:9px;top:3px;font-size:13.6px">Line</div><div class="a" style="left:82.1px;top:2.4px;width:16.3px;height:16.6px;border-radius:4.5px;background:linear-gradient(#2a92ff,#0a7cff)"><svg width="16.3" height="16.6" viewBox="0 0 16.3 16.6"><path d="M5 6.6L8.15 3.6L11.3 6.6M5 10L8.15 13L11.3 10" fill="none" stroke="#fff" stroke-width="1.5" stroke-linecap="round" stroke-linejoin="round"/></svg></div></div>
<div class="t  k" style="left:1096.9px;top:158.10000000000002px;font-size:14.2px">200.0 / 20.0</div>
<div class="tg on" style="left:1192.7px;top:161.9px"><i></i></div>
<div class="tg on" style="left:1236.7px;top:161.9px"><i></i></div>
<div class="t  k" style="left:905.5px;top:186.8px;font-size:14.3px">C02</div>
<div class="a" style="left:942px;top:184.5px;width:31px;height:20.2px;background:#fb2a3f;color:#fff;font-size:13px;text-align:center;line-height:20.5px">02</div>
<div class="t  k" style="left:983.4px;top:186.8px;font-size:13.4px">Image</div>
<div class="t  k" style="left:1096.9px;top:186.8px;font-size:14.2px">200.0 / 20.0</div>
<div class="tg on" style="left:1192.7px;top:190.6px"><i></i></div>
<div class="tg on" style="left:1236.7px;top:190.6px"><i></i></div>
<div class="t  k" style="left:905.5px;top:215.5px;font-size:14.3px">C00</div>
<div class="a" style="left:942px;top:213.2px;width:31px;height:20.2px;background:#000;color:#fff;font-size:13px;text-align:center;line-height:20.5px">00</div>
<div class="a" style="left:983.6px;top:211.2px;width:100.6px;height:21.8px;background:#fff;border-radius:5.5px;box-shadow:0 0 0 .5px rgba(0,0,0,.1),0 .6px 1.4px rgba(0,0,0,.2)"><div class="t k" style="left:9px;top:3px;font-size:13.6px">Fill</div><div class="a" style="left:82.1px;top:2.4px;width:16.3px;height:16.6px;border-radius:4.5px;background:linear-gradient(#2a92ff,#0a7cff)"><svg width="16.3" height="16.6" viewBox="0 0 16.3 16.6"><path d="M5 6.6L8.15 3.6L11.3 6.6M5 10L8.15 13L11.3 10" fill="none" stroke="#fff" stroke-width="1.5" stroke-linecap="round" stroke-linejoin="round"/></svg></div></div>
<div class="t  k" style="left:1096.9px;top:215.5px;font-size:14.2px">100.0 / 20.0</div>
<div class="tg on" style="left:1192.7px;top:219.29999999999998px"><i></i></div>
<div class="tg on" style="left:1236.7px;top:219.29999999999998px"><i></i></div>
<div class="t  k" style="left:905.5px;top:248.10000000000002px;font-size:14.3px">c01</div>
<div class="a" style="left:942px;top:245.8px;width:31px;height:20.2px;background:#0000ff;color:#fff;font-size:13px;text-align:center;line-height:20.5px">01</div>
<div class="a" style="left:983.6px;top:243.8px;width:100.6px;height:21.8px;background:#fff;border-radius:5.5px;box-shadow:0 0 0 .5px rgba(0,0,0,.1),0 .6px 1.4px rgba(0,0,0,.2)"><div class="t k" style="left:9px;top:3px;font-size:13.6px">Line</div><div class="a" style="left:82.1px;top:2.4px;width:16.3px;height:16.6px;border-radius:4.5px;background:linear-gradient(#2a92ff,#0a7cff)"><svg width="16.3" height="16.6" viewBox="0 0 16.3 16.6"><path d="M5 6.6L8.15 3.6L11.3 6.6M5 10L8.15 13L11.3 10" fill="none" stroke="#fff" stroke-width="1.5" stroke-linecap="round" stroke-linejoin="round"/></svg></div></div>
<div class="t  k" style="left:1096.9px;top:248.10000000000002px;font-size:14.2px">100.0 / 20.0</div>
<div class="tg on" style="left:1192.7px;top:251.9px"><i></i></div>
<div class="tg on" style="left:1236.7px;top:251.9px"><i></i></div>
<div class="a" style="left:898.3px;top:345.3px;width:381.7px;height:1px;background:#c4c4c4"></div>
<div class="a" style="left:898.3px;top:148.8px;width:1.2px;height:197px;background:#ededed"></div>
<div class="a" style="left:899.4px;top:148.8px;width:0.9px;height:197px;background:#cfcfcf"></div>
<div class="a" style="left:899px;top:347.5px;width:385px;height:74.5px;background:#e6e6e6;border-radius:5px;box-shadow:0 0 0 .6px #d6d6d6"></div>
<div class="t k" style="right:147.20000000000005px;top:357.7px;font-size:13.8px">Layer Color</div>
<div class="a" style="left:1139.2px;top:354.2px;width:73.8px;height:19.8px;background:#fb0505;box-sizing:border-box;border:1.2px solid #1a1a1a"></div>
<div class="t  k" style="left:1226px;top:357.2px;font-size:14px">Speed (mm/s)</div>
<div class="t k" style="right:147.20000000000005px;top:378.9px;font-size:13.7px">Pass Count</div>
<div class="t k" style="right:147.20000000000005px;top:399.7px;font-size:14px">Interval (mm)</div>
<div class="a" style="left:1140.5px;top:378.6px;width:56.5px;height:15.2px;background:#fff;box-shadow:0 0 0 .5px #cfcfcf,0 -1px 0 #c9c9c9;text-align:right;font-size:14px;line-height:14.6px;box-sizing:border-box;padding-right:4.5px;-webkit-text-stroke:.25px #111">1</div>
<div class="a" style="left:1199.7px;top:375.6px;width:12px;height:20px;border-radius:5px;background:linear-gradient(#fdfdfd,#f0f0f0);box-shadow:0 0 0 .5px #c4c4c4,0 .5px 1px rgba(0,0,0,.2)"><svg class="a" style="left:0;top:0" width="12" height="20" viewBox="0 0 12 20"><path d="M3 6.7L6 3.8L9 6.7M3 13.3L6 16.2L9 13.3" fill="none" stroke="#222" stroke-width="1.7" stroke-linecap="round" stroke-linejoin="round"/></svg></div>
<div class="a" style="left:1140.5px;top:400px;width:56.5px;height:15.2px;background:#fff;box-shadow:0 0 0 .5px #cfcfcf,0 -1px 0 #c9c9c9;text-align:right;font-size:14px;line-height:14.6px;box-sizing:border-box;padding-right:4.5px;-webkit-text-stroke:.25px #111">0.080</div>
<div class="a" style="left:1199.7px;top:397px;width:12px;height:20px;border-radius:5px;background:linear-gradient(#fdfdfd,#f0f0f0);box-shadow:0 0 0 .5px #c4c4c4,0 .5px 1px rgba(0,0,0,.2)"><svg class="a" style="left:0;top:0" width="12" height="20" viewBox="0 0 12 20"><path d="M3 6.7L6 3.8L9 6.7M3 13.3L6 16.2L9 13.3" fill="none" stroke="#222" stroke-width="1.7" stroke-linecap="round" stroke-linejoin="round"/></svg></div>
<div class="t  k" style="left:1219px;top:378.4px;font-size:14px">Power Max (%)</div>
<div class="t  k" style="left:1222px;top:399.7px;font-size:14px">Power Min (%)</div>
<div class="a" style="left:899px;top:425.4px;width:138px;height:10px;background:#e6e6e6;border-radius:4px;box-shadow:0 0 0 .6px #d8d8d8"></div>
<div class="a" style="left:1039.3px;top:425.8px;width:231.6px;height:21px;background:#fff;border-radius:5.5px;box-shadow:0 0 0 .5px rgba(0,0,0,.12),0 1px 1.5px rgba(0,0,0,.2);overflow:hidden"><div class="a" style="left:0;top:0;width:103px;height:21px;background:linear-gradient(#2390ff,#0a7eff);border-radius:5.5px 0 0 5.5px"></div><div class="a" style="left:161.5px;top:3px;width:1px;height:15px;background:#ebebeb"></div></div>
<div class="t " style="left:1048.8px;top:429px;color:#fff;font-size:13.7px;-webkit-text-stroke:.25px #fff">Cuts / Layers</div>
<div class="t  k" style="left:1155px;top:429px;font-size:14px">Move</div>
<div class="t  k" style="left:1214px;top:429px;font-size:14px">File List</div>
<div class="a" style="left:898.3px;top:448.4px;width:381.7px;height:21.6px;background:linear-gradient(90deg,#050101 0,#120404 10%,#340809 22%,#4e0a10 32%,#6e0f16 42%,#8a141c 52%,#a81a24 63%,#c01d27 75%,#d02428 85%,#d6302a 94%,#da3e2a 100%);box-shadow:inset 0 -1.2px 0 rgba(190,0,0,.3), inset 0 1px 0 rgba(0,0,0,.3)"></div><svg class="a" style="left:898px;top:448.4px" width="50" height="21.6" viewBox="898 448.4 50 21.6"><defs><radialGradient id="bg448" cx=".5" cy=".4" r=".6"><stop offset="0" stop-color="#6a6a6a"/><stop offset="1" stop-color="#3c3c3c"/></radialGradient></defs><circle cx="907" cy="458.9" r="6.7" fill="url(#bg448)"/><circle cx="925.8" cy="458.9" r="6.7" fill="url(#bg448)"/><path d="M904.4 456.29999999999995L909.6 461.5M909.6 456.29999999999995L904.4 461.5" stroke="#fff" stroke-width="2.2" stroke-linecap="round"/><path d="M924.6 457.29999999999995V455.9H929.4V459.9H928" fill="none" stroke="#fff" stroke-width="1.1"/><rect x="922.4" y="457.7" width="4.8" height="4" fill="none" stroke="#fff" stroke-width="1.2"/></svg><div class="t " style="left:937.3px;top:451.2px;color:#fff;font-size:11.6px;letter-spacing:.12px;-webkit-text-stroke:.25px #fff">Laser</div>
<div class="t  k" style="left:899.2px;top:474.4px;font-size:14px">Disconnected</div>
<div class="a" style="left:906px;top:501px;width:122px;height:47px;box-sizing:border-box;border:1px solid #ababab;box-shadow:inset 0 0 0 1px rgba(255,255,255,.55);background:linear-gradient(#e8e8ea,#ececee 35%,#f0f0f0 60%,#f5f5f3);"><svg class="a" style="left:31px;top:13.6px" width="16" height="17"><rect x="0.4" y="0" width="4.8" height="16.4" rx=".8" fill="#000"/><rect x="9.2" y="0" width="4.8" height="16.4" rx=".8" fill="#000"/></svg><div class="t k" style="left:52.6px;top:15px;font-size:13.5px">Pause</div></div>
<div class="a" style="left:1032px;top:501px;width:121px;height:47px;box-sizing:border-box;border:1px solid #ababab;box-shadow:inset 0 0 0 1px rgba(255,255,255,.55);background:linear-gradient(#e8e8ea,#ececee 35%,#f0f0f0 60%,#f5f5f3);"><svg class="a" style="left:34.5px;top:13.8px" width="17" height="17"><rect x="0" y="0" width="16" height="16.2" rx=".6" fill="#000"/></svg><div class="t k" style="left:56.6px;top:15px;font-size:13.5px">Stop</div></div>
<div class="a" style="left:1157px;top:501px;width:122px;height:47px;box-sizing:border-box;border:1px solid #ababab;box-shadow:inset 0 0 0 1px rgba(255,255,255,.55);background:linear-gradient(#e8e8ea,#ececee 35%,#f0f0f0 60%,#f5f5f3);"><svg class="a" style="left:34.5px;top:14px" width="16" height="17"><path d="M0.5 0.3L15 8.2L0.5 16.2Z" fill="#000"/></svg><div class="t k" style="left:56px;top:15px;font-size:13.5px">Start</div></div>
<div class="a" style="left:906px;top:558px;width:122px;height:46px;box-sizing:border-box;border:1px solid #ababab;box-shadow:inset 0 0 0 1px rgba(255,255,255,.55);background:linear-gradient(#e8e8ea,#ececee 35%,#f0f0f0 60%,#f5f5f3);"><svg class="a" style="left:28.6px;top:14.2px" width="18" height="18" viewBox="0 0 18 18"><path d="M1.3 6V1.3H6.2M10.8 1.3H15.6V6M15.6 10.8V15.6H10.8M6.2 15.6H1.3V10.8" fill="none" stroke="#000" stroke-width="2.3"/></svg><div class="t k" style="left:51.4px;top:15px;font-size:13.5px">Frame</div></div>
<div class="a" style="left:1032px;top:558px;width:121px;height:46px;box-sizing:border-box;border:1px solid #ababab;box-shadow:inset 0 0 0 1px rgba(255,255,255,.55);background:linear-gradient(#e8e8ea,#ececee 35%,#f0f0f0 60%,#f5f5f3);"><svg class="a" style="left:29px;top:13.9px" width="18" height="18" viewBox="0 0 18 18"><circle cx="8.7" cy="8.7" r="7" fill="none" stroke="#000" stroke-width="2.1" stroke-dasharray="4.6 2.73" stroke-dashoffset="2.3"/></svg><div class="t k" style="left:51.4px;top:15px;font-size:13.5px">Frame</div></div>
<div class="a" style="left:1157px;top:558px;width:122px;height:46px;box-sizing:border-box;border:1px solid #ababab;box-shadow:inset 0 0 0 1px rgba(255,255,255,.55);background:linear-gradient(#e8e8ea,#ececee 35%,#f0f0f0 60%,#f5f5f3);"><div class="t k" style="left:22.6px;top:15px;font-size:13.5px">Save RD file</div></div>
<div class="a" style="left:906px;top:617.8px;width:107px;height:20px;background:#fff;border-radius:5.5px;box-shadow:0 0 0 .5px rgba(0,0,0,.12),0 1px 1.5px rgba(0,0,0,.22)"><svg class="a" style="left:23px;top:2.2px" width="17" height="15" viewBox="0 0 17 15"><path d="M1 7.8L8.5 1.3L16 7.8" fill="none" stroke="#000" stroke-width="2.2"/><path d="M3.7 7V13.4H13.3V7" fill="none" stroke="#000" stroke-width="2.2"/><path d="M7.2 13.6V9.2H9.8V13.6" fill="none" stroke="#000" stroke-width="1.5"/><rect x="11.4" y="1.2" width="2.2" height="3.8" fill="#000"/></svg><div class="t k" style="left:46.4px;top:2.5px;font-size:13.8px">Home</div></div>
<div class="a" style="left:1021px;top:617.8px;width:107px;height:20px;background:#fff;border-radius:5.5px;box-shadow:0 0 0 .5px rgba(0,0,0,.12),0 1px 1.5px rgba(0,0,0,.22)"><div class="t k" style="left:16px;top:2.3px;font-size:13.9px">Go to Origin</div></div>
<div class="t  k" style="left:1174.3px;top:619px;font-size:13.9px">Start From:</div>
<div class="a" style="left:1252.5px;top:615.6px;width:40px;height:21.4px;background:#fff;border-radius:5.5px;box-shadow:0 0 0 .5px rgba(0,0,0,.12),0 1px 1.5px rgba(0,0,0,.22)"><div class="t" style="left:8.5px;top:3.4px;font-size:14.2px;color:#145214;-webkit-text-stroke:.2px #145214">Abs</div></div>
<div class="tg" style="left:905px;top:647.9px;border-color:#2a2a2a;background:#3a3a3a"><i style="background:#cfcfcf;border-color:#2a2a2a"></i></div>
<div class="t " style="left:924.2px;top:644.2px;font-size:13.4px;color:#a8a8a8">Enable Rotary</div>
<div class="t  k" style="left:1180px;top:660.4px;font-size:13.9px">Job Origin</div>
<div class="a" style="left:1252.5px;top:640px;width:40px;height:53.5px;background:#e2e2e2;border-radius:5px;box-shadow:0 0 0 .6px #d6d6d6"><svg class="a" style="left:0;top:0" width="28" height="54"><circle cx="11.5" cy="12.4" r="6.3" fill="#efefef" stroke="#dadada" stroke-width=".6"/><circle cx="11.5" cy="12.4" r="2.8" fill="#a6a6a6"/><circle cx="11.5" cy="26.5" r="6.3" fill="#ededed" stroke="#dcdcdc" stroke-width=".6"/><circle cx="11.5" cy="40.5" r="6.3" fill="#ededed" stroke="#dcdcdc" stroke-width=".6"/></svg></div>
<div class="tg on" style="left:903.4px;top:685.6px"><i></i></div>
<div class="t  k" style="left:922.4px;top:682.6px;font-size:13.8px">Cut Selected Graphics</div>
<div class="tg gr" style="left:903.4px;top:705.6px;border-color:#333"><i style="border-color:#333"></i></div>
<div class="t " style="left:922.4px;top:702.8px;font-size:13.8px;color:#a8a8a8">Use Selection Origin</div>
<div class="a" style="left:1136px;top:700.2px;width:160px;height:24px;background:#fff;border-radius:5.5px;box-shadow:0 0 0 .5px rgba(0,0,0,.12),0 1px 1.5px rgba(0,0,0,.22)"><svg class="a" style="left:61.5px;top:1.4px" width="17" height="17" viewBox="0 0 17 17"><path d="M8.5 0.6V3.4M8.5 13.6V16.4M0.6 8.5H3.6M13.4 8.5H16.4" stroke="#111" stroke-width="1.4"/><path d="M8.5 5V12M5 8.5H12" stroke="#f01010" stroke-width="1.8"/></svg><div class="t k" style="left:84.6px;top:2px;font-size:14.2px">Show Last Position</div></div>
<div class="a" style="left:0px;top:112px;width:894px;height:0.9px;background:#e6e6e6"></div>
</div>
</body></html>
